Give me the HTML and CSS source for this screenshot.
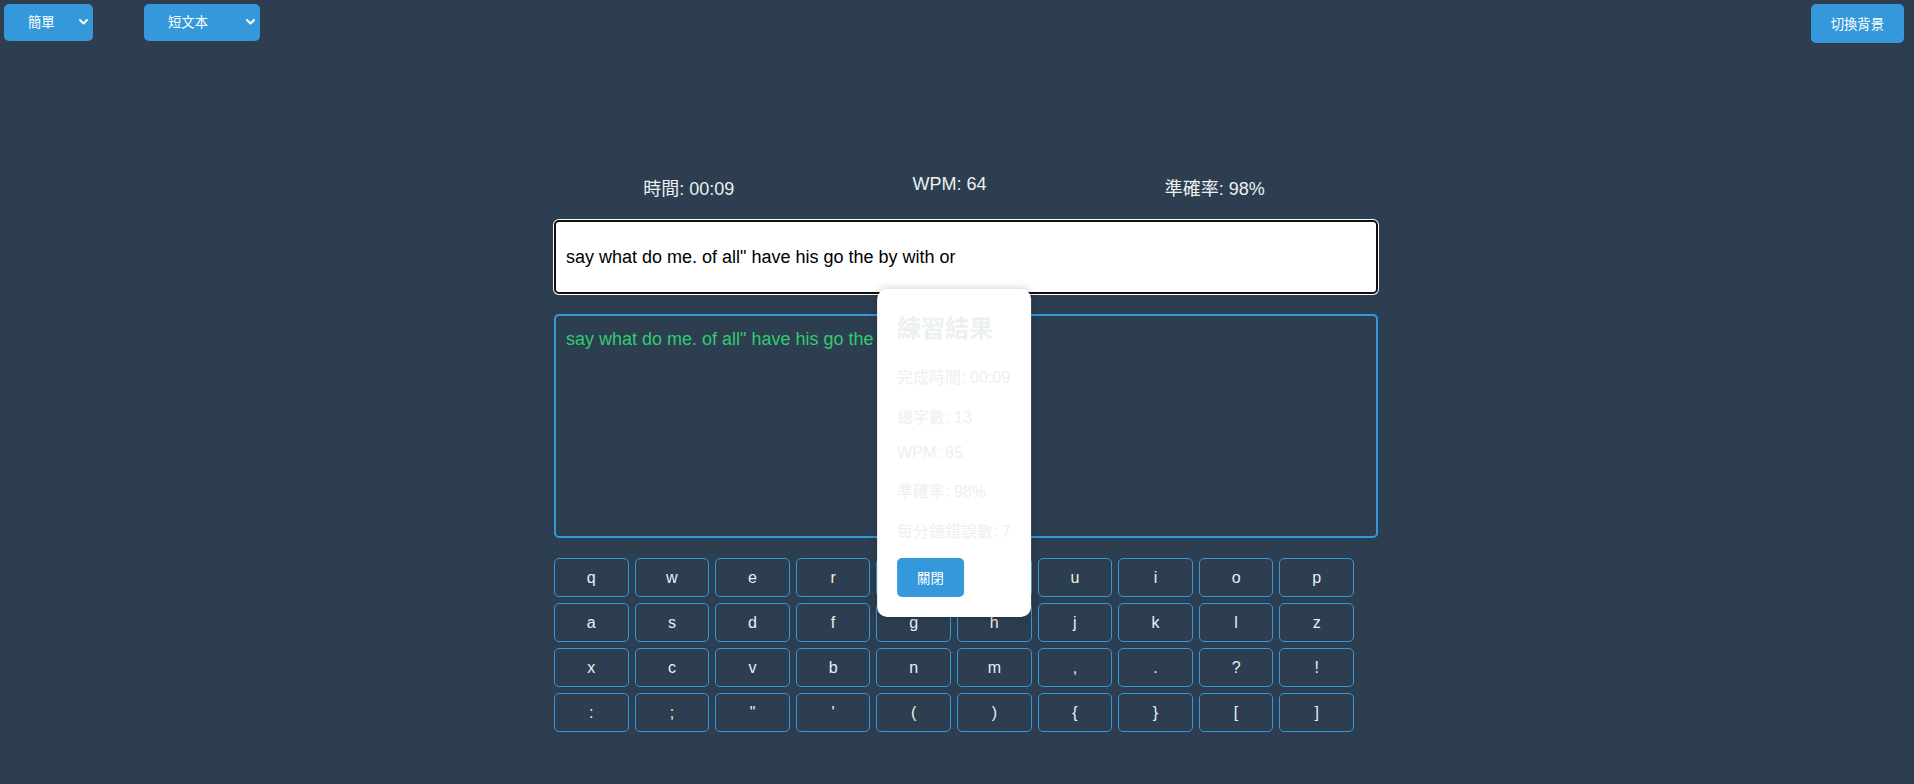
FILE: index.html
```html
<!DOCTYPE html>
<html lang="zh-Hant">
<head>
<meta charset="utf-8">
<title>打字練習</title>
<link rel="stylesheet" href="styles.css">
</head>
<body>
<header class="topbar">
  <div class="selects">
    <div class="select-wrap">
      <select class="select select-level">
        <option>簡單</option>
        <option>中等</option>
        <option>困難</option>
      </select>
      <svg class="chevron" width="9" height="6" viewBox="0 0 9 6"><path d="M1 1 L4.5 4.5 L8 1" fill="none" stroke="#fff" stroke-width="2" stroke-linecap="round" stroke-linejoin="round"/></svg>
    </div>
    <div class="select-wrap">
      <select class="select select-mode">
        <option>短文本</option>
        <option>長文本</option>
      </select>
      <svg class="chevron" width="9" height="6" viewBox="0 0 9 6"><path d="M1 1 L4.5 4.5 L8 1" fill="none" stroke="#fff" stroke-width="2" stroke-linecap="round" stroke-linejoin="round"/></svg>
    </div>
  </div>
  <button class="btn">切換背景</button>
</header>

<main class="container">
  <div class="stats">
    <div class="stat">時間: 00:09</div>
    <div class="stat">WPM: 64</div>
    <div class="stat">準確率: 98%</div>
  </div>
  <input class="typing-input" type="text" value="say what do me. of all&quot; have his go the by with or">
  <div class="display"><span class="correct">say what do me. of all" have his go the</span></div>
  <div class="keyboard">
    <button class="key">q</button><button class="key">w</button><button class="key">e</button><button class="key">r</button><button class="key">t</button><button class="key">y</button><button class="key">u</button><button class="key">i</button><button class="key">o</button><button class="key">p</button>
    <button class="key">a</button><button class="key">s</button><button class="key">d</button><button class="key">f</button><button class="key">g</button><button class="key">h</button><button class="key">j</button><button class="key">k</button><button class="key">l</button><button class="key">z</button>
    <button class="key">x</button><button class="key">c</button><button class="key">v</button><button class="key">b</button><button class="key">n</button><button class="key">m</button><button class="key">,</button><button class="key">.</button><button class="key">?</button><button class="key">!</button>
    <button class="key">:</button><button class="key">;</button><button class="key">"</button><button class="key">'</button><button class="key">(</button><button class="key">)</button><button class="key">{</button><button class="key">}</button><button class="key">[</button><button class="key">]</button>
  </div>

  <div class="modal">
    <h2 class="modal-title">練習結果</h2>
    <p class="modal-line">完成時間: 00:09</p>
    <p class="modal-line">總字數: 13</p>
    <p class="modal-line">WPM: 85</p>
    <p class="modal-line">準確率: 98%</p>
    <p class="modal-line">每分鐘錯誤數: 7</p>
    <button class="btn">關閉</button>
  </div>
</main>
</body>
</html>
```

FILE: styles.css
```css
* {
  box-sizing: content-box;
}

html, body {
  margin: 0;
  padding: 0;
}

body {
  background: #2c3e50;
  color: #ecf0f1;
  font-family: "Liberation Sans", Arial, "Noto Sans CJK TC", sans-serif;
  height: 784px;
  overflow: hidden;
}

.topbar {
  display: flex;
  justify-content: space-between;
  align-items: flex-start;
  padding: 4px 10px 0 4px;
  height: 39px;
}

.selects {
  display: flex;
  gap: 51px;
}

.select-wrap {
  position: relative;
  display: inline-block;
}

.select {
  appearance: none;
  -webkit-appearance: none;
  background: #3498db;
  color: #fff;
  border: none;
  border-radius: 5px;
  height: 37px;
  padding: 0 0 0 24px;
  font-family: "Liberation Sans", Arial, "Noto Sans CJK TC", sans-serif;
  font-size: 13.333px;
  margin: 0;
  box-sizing: border-box;
  outline: none;
}

.select-level {
  width: 89px;
}

.select-mode {
  width: 116px;
}

.chevron {
  position: absolute;
  right: 5px;
  top: 15px;
  pointer-events: none;
}

.btn {
  background: #3498db;
  color: #fff;
  border: none;
  border-radius: 5px;
  padding: 10px 20px;
  font-family: "Liberation Sans", Arial, "Noto Sans CJK TC", sans-serif;
  font-size: 13.333px;
  margin: 0;
  cursor: pointer;
}

.container {
  position: relative;
  width: 800px;
  margin: 131px 0 0 calc(50% - 403px);
}

.stats {
  display: flex;
  justify-content: space-around;
  font-size: 18px;
  margin-bottom: 20px;
}

.typing-input {
  display: block;
  width: 100%;
  height: 50px;
  padding: 10px;
  border: 2px solid #101010;
  border-radius: 5px;
  background: #fff;
  color: #000;
  font-family: "Liberation Sans", Arial, "Noto Sans CJK TC", sans-serif;
  font-size: 18px;
  margin: 0 0 20px 0;
  box-shadow: 0 0 0 1px #fff;
  outline: none;
}

.display {
  width: 100%;
  min-height: 200px;
  padding: 10px;
  border: 2px solid #3498db;
  border-radius: 5px;
  font-size: 18px;
  line-height: 1.5;
  margin-bottom: 20px;
}

.correct {
  color: #2ecc71;
}

.keyboard {
  display: grid;
  grid-template-columns: repeat(10, 1fr);
  gap: 6px;
}

.key {
  height: 39px;
  box-sizing: border-box;
  border: 1px solid #3498db;
  border-radius: 5px;
  background: transparent;
  color: #ecf0f1;
  font-family: "Liberation Sans", Arial, "Noto Sans CJK TC", sans-serif;
  font-size: 16px;
  padding: 0;
  margin: 0;
}

.modal {
  position: absolute;
  top: 50%;
  left: 50%;
  transform: translate(-50%, -50%);
  background: #fff;
  border-radius: 10px;
  padding: 20px;
  box-shadow: 0 0 10px rgba(0, 0, 0, 0.2);
  white-space: nowrap;
  z-index: 10;
}

.modal-title {
  font-size: 24px;
  font-weight: bold;
  margin: 0 0 20px 0;
}

.modal-line {
  font-size: 16px;
  margin: 16px 0;
}
```
